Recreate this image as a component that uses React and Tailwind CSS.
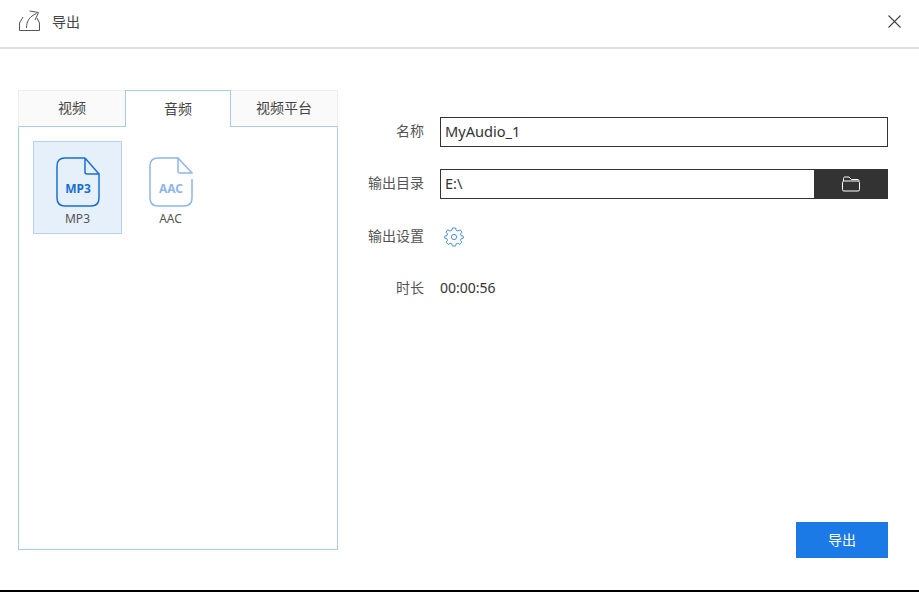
import React from 'react';

const font = { fontFamily: '"Noto Sans", "Noto Sans CJK SC", sans-serif' };

function ExportIcon() {
  return (
    <svg width="22" height="22" viewBox="0 0 22 22" fill="none" stroke="#555" strokeWidth="1">
      <path d="M4 7 L0.5 13 V20.5 H20.5 V13 L18 8" />
      <path d="M7.5 18 C7.5 11 10.5 6.5 17.5 3.5" />
      <path d="M10.5 1 L19.5 2.5 L16 10" />
    </svg>
  );
}

function GearIcon() {
  return (
    <svg className="ml-[4px]" width="20" height="20" viewBox="0 0 20 20" fill="none" stroke="#4a90d9" strokeWidth="1" strokeLinejoin="round">
      <path d="M8.4 1 H11.6 L12.2 3.3 L14 4 L16.2 2.9 L18 5.2 L16.5 7 L17 8.6 L19.3 9.2 V11.2 L17 11.8 L16.4 13.4 L17.8 15.2 L15.8 17.4 L13.8 16.2 L12.2 16.8 L11.6 19 H8.4 L7.8 16.8 L6.2 16.2 L4.2 17.4 L2.2 15.2 L3.6 13.4 L3 11.8 L0.7 11.2 V9.2 L3 8.6 L3.5 7 L2 5.2 L3.8 2.9 L6 4 L7.8 3.3 Z" />
      <circle cx="10" cy="10" r="2.6" />
    </svg>
  );
}

function FileIcon({ label, color, faded }) {
  return (
    <svg width="44" height="50" viewBox="0 0 44 50" fill="none" stroke={color} strokeWidth="1.5">
      <path d="M29 1 H9 C4 1 1 4 1 9 V41 C1 46 4 49 9 49 H35 C40 49 43 46 43 41 V22" />
      {faded ? (
        <path d="M29 1 V15 C29 16 30 16 31 16 H43 Z" />
      ) : (
        <path d="M29 1 V15 C29 16 30 17 31 17 H43 V22 M29 1 L43 17" />
      )}
      <text x="22" y="36" textAnchor="middle" fontSize="12" fontWeight="700" fill={color} stroke="none" fontFamily="'Noto Sans', sans-serif">{label}</text>
    </svg>
  );
}

function Tab({ children, active, first, last }) {
  if (active) {
    return (
      <div className="w-[106px] h-[37px] pb-[2px] flex items-center justify-center bg-white border border-b-0 border-[#a9cbe4] text-[14px] text-[#444]">
        {children}
      </div>
    );
  }
  return (
    <div className={"flex-1 h-[37px] pb-[2px] flex items-center justify-center bg-[#fafafa] border-t border-t-[#eeeeee] border-b border-b-[#a9cbe4] text-[14px] text-[#444] " + (first ? "border-l border-l-[#eeeeee]" : "") + (last ? "border-r border-r-[#eeeeee]" : "")}>
      {children}
    </div>
  );
}

function Row({ label, children, className }) {
  return (
    <div className={"flex items-center " + className}>
      <div className="w-[74px] pb-[3px] text-right text-[14px] text-[#555] mr-[16px] shrink-0">{label}</div>
      {children}
    </div>
  );
}

export default function App() {
  return (
    <div style={font} className="w-[919px] h-[592px] bg-white flex flex-col overflow-hidden">
      {/* Header */}
      <div className="h-[49px] shrink-0 flex items-center pl-[19px] pr-[18px] pb-[5px] border-b-2 border-[#dedede]">
        <ExportIcon />
        <span className="ml-[11px] text-[14px] text-[#444]">导出</span>
        <svg className="ml-auto" width="13" height="13" viewBox="0 0 13 13" stroke="#444" strokeWidth="1.1">
          <path d="M0.5 0.5 L12.5 12.5 M12.5 0.5 L0.5 12.5" />
        </svg>
      </div>

      <div className="flex-1 flex pl-[18px] pr-[31px] pt-[41px]">
        {/* Left panel */}
        <div className="w-[320px] h-[460px] flex flex-col">
          <div className="flex shrink-0">
            <Tab first>视频</Tab>
            <Tab active>音频</Tab>
            <Tab last>视频平台</Tab>
          </div>
          <div className="flex-1 flex items-start gap-[4px] pl-[14px] pt-[14px] border border-t-0 border-[#a9cbe4]">
            <div className="w-[89px] h-[93px] flex flex-col items-center pt-[15px] bg-[#e5f0fb] border border-[#b5d3ee]">
              <FileIcon label="MP3" color="#1a6fd0" />
              <span className="text-[12px] leading-[14px] mt-[5px] text-[#555]">MP3</span>
            </div>
            <div className="w-[89px] h-[93px] flex flex-col items-center pt-[16px]">
              <FileIcon label="AAC" color="#8fb6e6" faded />
              <span className="text-[12px] leading-[14px] mt-[5px] text-[#555]">AAC</span>
            </div>
          </div>
        </div>

        {/* Right panel */}
        <div className="flex-1 flex flex-col pl-[12px]">
          <Row label="名称" className="mt-[27px] h-[30px]">
            <div className="flex-1 h-[30px] flex items-center pl-[4px] border border-[#333] text-[14.6px] text-[#333]">
              MyAudio_1
            </div>
          </Row>
          <Row label="输出目录" className="mt-[22px] h-[30px]">
            <div className="flex-1 h-[30px] flex items-center pl-[4px] border border-r-0 border-[#333] text-[14.6px] text-[#333]">
              E:\
            </div>
            <div className="w-[74px] h-[30px] flex items-center justify-center bg-[#333333]">
              <svg width="18" height="16" viewBox="0 0 18 16" fill="none" stroke="#fff" strokeWidth="1">
                <path d="M1.5 5 V2.5 C1.5 1.5 2 1 3 1 H7 L9.5 3.5 H16 C16.5 3.5 17 4 17 5" />
                <rect x="0.5" y="5" width="17" height="10" rx="1.5" />
              </svg>
            </div>
          </Row>
          <Row label="输出设置" className="mt-[23px] h-[30px]">
            <GearIcon />
          </Row>
          <Row label="时长" className="mt-[22px] h-[30px]">
            <span className="pb-[3px] text-[14px] text-[#333]">00:00:56</span>
          </Row>
          <button className="mt-auto mb-[32px] ml-auto w-[92px] h-[36px] pb-[2px] bg-[#1b7ae6] text-white text-[14px]">导出</button>
        </div>
      </div>

      <div className="h-[2px] shrink-0 bg-black" />
    </div>
  );
}
